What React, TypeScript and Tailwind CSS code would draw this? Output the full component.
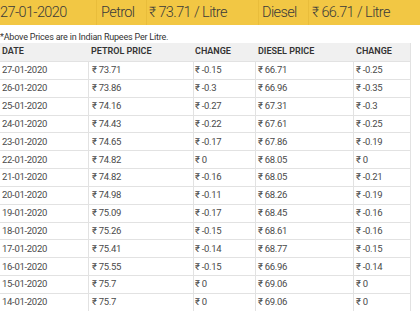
import React from 'react';

const rows: [string, string, string, string, string][] = [
  ['27-01-2020', '73.71', '-0.15', '66.71', '-0.25'],
  ['26-01-2020', '73.86', '-0.3', '66.96', '-0.35'],
  ['25-01-2020', '74.16', '-0.27', '67.31', '-0.3'],
  ['24-01-2020', '74.43', '-0.22', '67.61', '-0.25'],
  ['23-01-2020', '74.65', '-0.17', '67.86', '-0.19'],
  ['22-01-2020', '74.82', '0', '68.05', '0'],
  ['21-01-2020', '74.82', '-0.16', '68.05', '-0.21'],
  ['20-01-2020', '74.98', '-0.11', '68.26', '-0.19'],
  ['19-01-2020', '75.09', '-0.17', '68.45', '-0.16'],
  ['18-01-2020', '75.26', '-0.15', '68.61', '-0.16'],
  ['17-01-2020', '75.41', '-0.14', '68.77', '-0.15'],
  ['16-01-2020', '75.55', '-0.15', '66.96', '-0.14'],
  ['15-01-2020', '75.7', '0', '69.06', '0'],
  ['14-01-2020', '75.7', '0', '69.06', '0'],
];

const cols = 'grid grid-cols-[88px_105px_62px_98px_58px]';

export default function App() {
  return (
    <div className="w-[420px] h-[315px] overflow-hidden bg-white text-[#444]" style={{ fontFamily: 'Roboto, "Open Sans", sans-serif' }}>
      <div className="flex h-[25px] items-center bg-[#f2c744] text-[14.5px] font-light text-[#3a3a3a] tracking-[-0.6px]">
        <div className="w-[96px]">27-01-2020</div>
        <div className="w-[50px] h-full flex items-center pl-[4px] border-l border-[#e9bd3b]">Petrol</div>
        <div className="w-[112px] h-full flex items-center pl-[2px] border-l border-[#e9bd3b]">₹ 73.71 / Litre</div>
        <div className="w-[50px] h-full flex items-center pl-[3px] border-l border-[#e9bd3b]">Diesel</div>
        <div className="flex-1 h-full flex items-center pl-[3px] border-l border-[#e9bd3b]">₹ 66.71 / Litre</div>
      </div>
      <div className="h-[18px] pt-[6px] text-[9px] leading-[12px] text-[#333] tracking-[-0.2px]">*Above Prices are in Indian Rupees Per Litre.</div>
      <div className="w-[411px] border-r border-[#e2e2e2]">
        <div className={`${cols} h-[18px] items-center bg-[#f0f0f0] text-[9px] font-semibold text-[#333]`}>
          <div className="pl-[2px]">DATE</div>
          <div className="pl-[3px]">PETROL PRICE</div>
          <div className="pl-[2px]">CHANGE</div>
          <div className="pl-[3px]">DIESEL PRICE</div>
          <div className="pl-[3px]">CHANGE</div>
        </div>
        {rows.map((r) => (
          <div key={r[0]} className={`${cols} h-[17.85px] border-t border-[#e2e2e2] text-[9.5px] tracking-[-0.3px] text-[#4a4a4a]`}>
            <div className="pl-[2px] flex items-center">{r[0]}</div>
            <div className="pl-[3px] flex items-center border-l border-[#e2e2e2]">₹ {r[1]}</div>
            <div className="pl-[1px] flex items-center border-l border-[#e2e2e2]">₹ {r[2]}</div>
            <div className="pl-[2px] flex items-center border-l border-[#e2e2e2]">₹ {r[3]}</div>
            <div className="pl-[2px] flex items-center border-l border-[#e2e2e2]">₹ {r[4]}</div>
          </div>
        ))}
      </div>
    </div>
  );
}
